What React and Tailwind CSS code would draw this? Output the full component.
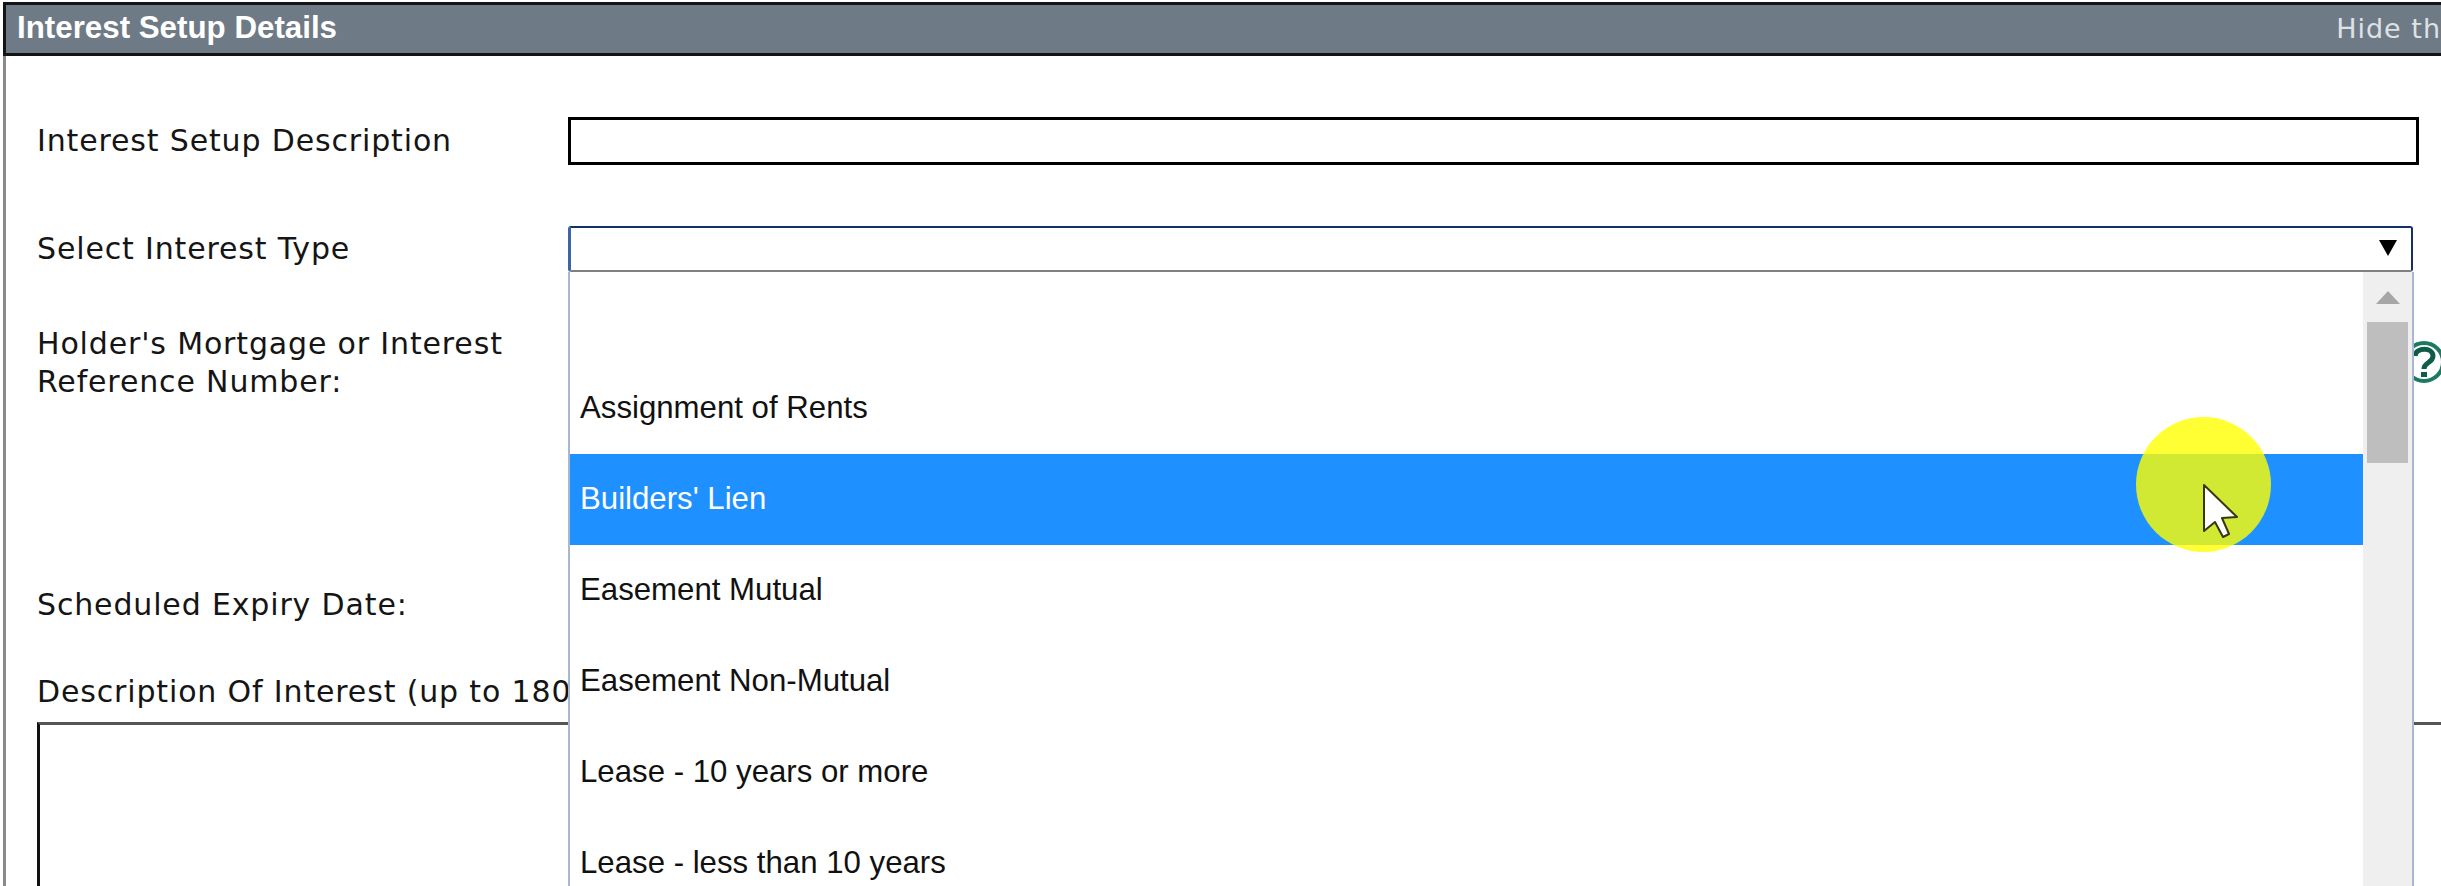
const labelFont = "font-['DejaVu_Sans',Verdana,sans-serif]";

const interestTypes = [
  "",
  "Assignment of Rents",
  "Builders' Lien",
  "Easement Mutual",
  "Easement Non-Mutual",
  "Lease - 10 years or more",
  "Lease - less than 10 years",
];

function InterestDropdown() {
  return (
    <div className="absolute left-[568px] top-[272px] flex h-[614px] w-[1846px] border-x-2 border-x-[#a9b8d2] bg-white">
      <ul className="flex-1 font-['Liberation_Sans',Arial,sans-serif] text-[31.2px] text-[#111]">
        {interestTypes.map((item) =>
          item === "Builders' Lien" ? (
            <li key={item} className="flex h-[91px] items-center bg-[#1e90ff] pl-[10px] text-white">
              {item}
            </li>
          ) : (
            <li key={item} className="flex h-[91px] items-center pl-[10px]">
              {item}
            </li>
          ),
        )}
      </ul>
      <div className="flex w-[49px] flex-col items-center bg-[#f0eff0]">
        <svg width="24" height="13" viewBox="0 0 24 13" className="mt-[19px]">
          <path d="M12 0 L24 13 L0 13 Z" fill="#a6a6a6" />
        </svg>
        <div className="mt-[18px] h-[141px] w-[41px] bg-[#bebebe]" />
      </div>
    </div>
  );
}

function HelpIcon() {
  return (
    <svg width="44" height="44" viewBox="0 0 44 44" className="absolute left-[2402px] top-[340px]">
      <circle cx="22" cy="22" r="19" fill="#fff" stroke="#1b7a62" strokeWidth="4" />
      <path d="M13 16 C14 7 31 7 31 16 C31 23 22 22 22 29" fill="none" stroke="#0f5c4a" strokeWidth="5" />
      <rect x="19" y="32" width="6" height="5" fill="#0f5c4a" />
    </svg>
  );
}

function Cursor() {
  return (
    <svg width="40" height="58" viewBox="0 0 40 58" className="absolute left-[2201px] top-[482px]">
      <path
        d="M3 3 L36 35 L21 36 L28 52 L22 55 L14 40 L3 49 Z"
        fill="#fff"
        stroke="#38380c"
        strokeWidth="2"
        strokeLinejoin="round"
      />
    </svg>
  );
}

export default function App() {
  return (
    <div className="relative h-[886px] w-[2441px] overflow-hidden bg-white pl-[3px]">
      <div className="h-full border-l-[3px] border-l-[#8a8a8a]">
        <div className="-ml-[3px] mt-[2px] flex h-[54px] items-center justify-between border-[3px] border-r-0 border-[#141414] bg-[#6f7a87] pl-[11px]">
          <span className="pb-[2px] font-['Liberation_Sans',Arial,sans-serif] text-[31.3px] font-bold text-white">
            Interest Setup Details
          </span>
          <span className={`${labelFont} text-[27px] tracking-[1px] text-[#dfe2e5]`}>Hide th</span>
        </div>

        <div className={`${labelFont} pl-[31px] text-[30px] leading-[38px] tracking-[0.85px] text-[#151515]`}>
          <div className="mt-[61px] flex h-[48px] items-center">
            <label className="w-[531px]">Interest Setup Description</label>
            <div className="h-[48px] w-[1851px] border-[3px] border-black" />
          </div>
          <div className="mt-[61px] flex h-[46px] items-center">
            <label className="w-[531px]">Select Interest Type</label>
            <div className="flex h-[46px] w-[1845px] items-center justify-end rounded-[3px] border-2 border-l-[3px] border-[#13306b] border-b-[#808080] border-l-[#3a66a8] pb-[2px] pr-[14px]">
              <svg width="18" height="16" viewBox="0 0 18 16">
                <path d="M0 0 H18 L9 16 Z" fill="#000" />
              </svg>
            </div>
          </div>
          <p className="mt-[53px]">
            Holder's Mortgage or Interest
            <br />
            Reference Number:
          </p>
          <p className="mt-[185px]">Scheduled Expiry Date:</p>
          <p className="mt-[49px]">Description Of Interest (up to 180</p>
          <div className="mt-[11px] h-[200px] w-[2500px] border-[3px] border-r-0 border-b-0 border-[#111] border-t-[#555]" />
        </div>
      </div>

      <HelpIcon />
      <InterestDropdown />
      <div className="absolute left-[2136px] top-[417px] h-[135px] w-[135px] rounded-full bg-[#ffff00]/80" />
      <Cursor />
    </div>
  );
}
